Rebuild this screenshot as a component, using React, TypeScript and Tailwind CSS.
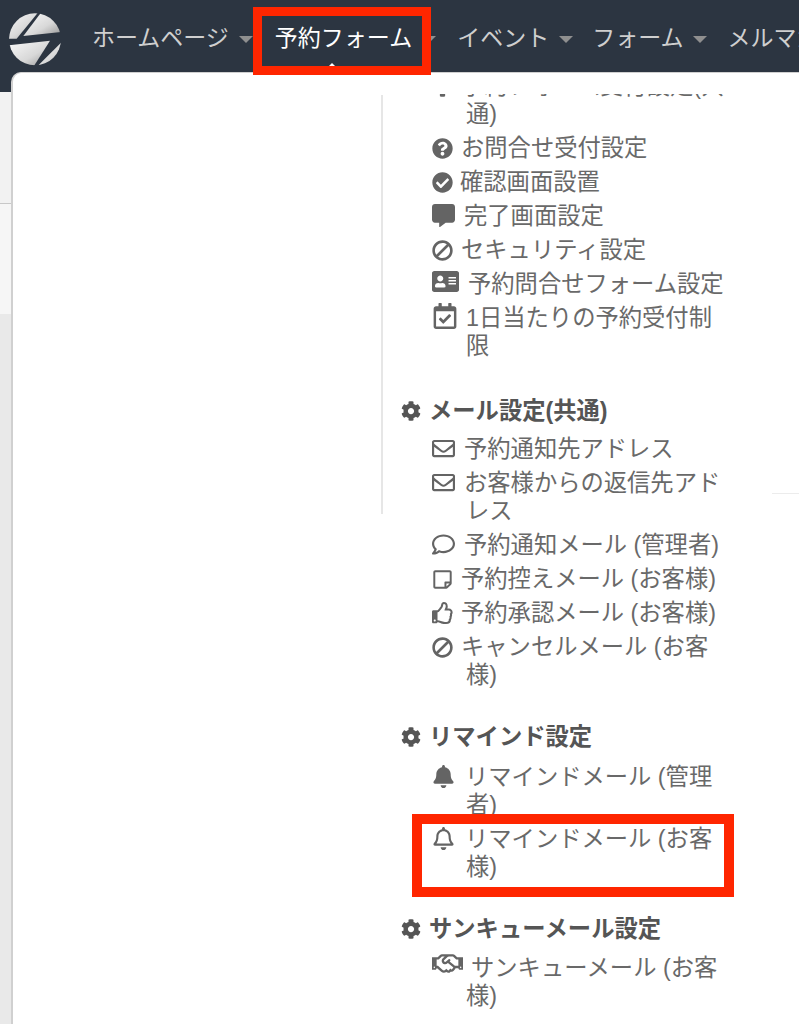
import React from 'react';
import {
  FaAddressCard,
  FaBan,
  FaBell,
  FaCheckCircle,
  FaCog,
  FaCommentAlt,
  FaQuestionCircle,
  FaRegBell,
  FaRegCalendarCheck,
  FaRegComment,
  FaRegEnvelope,
  FaRegHandshake,
  FaRegStickyNote,
  FaRegThumbsUp,
} from 'react-icons/fa';

const navItems = [
  { label: 'ホームページ', active: false, gap: 'mr-[22px]' },
  { label: '予約フォーム', active: true, gap: 'mr-[21px]' },
  { label: 'イベント', active: false, gap: 'mr-[19px]' },
  { label: 'フォーム', active: false, gap: 'mr-[20px]' },
  { label: 'メルマガ', active: false, gap: 'mr-[21px]' },
];

type Row = { icon: React.ReactNode; slot: string; text: string };

const banIcon = <FaBan className="-scale-x-100" />;

const formRows: Row[] = [
  { icon: <FaCog />, slot: 'w-[29px] text-[21px]', text: '予約フォーム受付設定(共\u200b通)' },
  { icon: <FaQuestionCircle />, slot: 'w-[29px] text-[21px]', text: 'お問合せ受付設定' },
  { icon: <FaCheckCircle />, slot: 'w-[28px] text-[21px]', text: '確認画面設置' },
  { icon: <FaCommentAlt />, slot: 'w-[32px] text-[23px]', text: '完了画面設定' },
  { icon: banIcon, slot: 'w-[29px] text-[21px]', text: 'セキュリティ設定' },
  { icon: <FaAddressCard />, slot: 'w-[36px] text-[27px]', text: '予約問合せフォーム設定' },
  { icon: <FaRegCalendarCheck />, slot: 'w-[34px] text-[26px]', text: '1日当たりの予約受付制限' },
];

const mailRows: Row[] = [
  { icon: <FaRegEnvelope />, slot: 'w-[32px] text-[23px]', text: '予約通知先アドレス' },
  { icon: <FaRegEnvelope />, slot: 'w-[32px] text-[23px]', text: 'お客様からの返信先アドレス' },
  { icon: <FaRegComment />, slot: 'w-[32px] text-[23px]', text: '予約通知メール (管理者)' },
  { icon: <FaRegStickyNote />, slot: 'w-[29px] text-[21px]', text: '予約控えメール (お客様)' },
  { icon: <FaRegThumbsUp />, slot: 'w-[29px] text-[22px]', text: '予約承認メール (お客様)' },
  { icon: banIcon, slot: 'w-[29px] text-[21px]', text: 'キャンセルメール (お客様)' },
];

const remindRows: Row[] = [
  { icon: <FaBell />, slot: 'w-[33px] text-[23px]', text: 'リマインドメール (管理者)' },
  { icon: <FaRegBell />, slot: 'w-[33px] text-[23px]', text: 'リマインドメール (お客様)' },
];

const thanksRows: Row[] = [
  { icon: <FaRegHandshake />, slot: 'w-[39px] text-[31px]', text: 'サンキューメール (お客様)' },
];

function Logo() {
  return (
    <svg viewBox="0 0 186 186" className="w-[62px] h-[62px] shrink-0">
      <defs>
        <linearGradient id="logoFill" x1="0.1" y1="0.1" x2="0.9" y2="0.9">
          <stop offset="0" stopColor="#f6f6f6" />
          <stop offset="0.6" stopColor="#d8d8d8" />
          <stop offset="1" stopColor="#a0a0a0" />
        </linearGradient>
        <clipPath id="logoClip">
          <circle cx="93" cy="94" r="78" />
        </clipPath>
      </defs>
      <g clipPath="url(#logoClip)" fill="url(#logoFill)">
        <path d="M105 10 L38 92 L5 92 L5 10 Z" />
        <path d="M114 10 L58 84 L180 71 L180 10 Z" />
        <path d="M5 113 L138 98 L86 180 L5 180 Z" />
        <path d="M95 180 L175 100 L180 180 Z" />
      </g>
    </svg>
  );
}

function MenuRow({ row }: { row: Row }) {
  return (
    <li className="pl-[34px] -indent-[34px] mb-[6px] leading-[28px]">
      <span className={`${row.slot} inline-flex items-center h-[20px] indent-0 align-[-3px] text-[#646464]`}>
        {row.icon}
      </span>
      {row.text}
    </li>
  );
}

function Heading({ text }: { text: string }) {
  return (
    <h4 className="flex items-center gap-[8px] h-[28px] font-bold text-[#555555]">
      <FaCog className="w-[20px] h-[20px] shrink-0 text-[#555555]" />
      {text}
    </h4>
  );
}

export default function App() {
  return (
    <div
      className="relative w-[799px] h-[1024px] overflow-hidden bg-white"
      style={{ fontFamily: '"Liberation Sans", "Noto Sans CJK JP", sans-serif' }}
    >
      <header className="h-[92px] bg-[#2c3541] flex items-start pl-[4px] pt-[8px]">
        <Logo />
        <nav className="flex items-center ml-[26px] h-[60px] whitespace-nowrap text-[23px]">
          {navItems.map((item) => (
            <div key={item.label} className="flex items-center shrink-0">
              <span className={item.active ? 'text-white' : 'text-[#cfcfcf]'}>{item.label}</span>
              <span className={`${item.gap} ml-[10px] w-0 h-0 border-x-[7px] border-x-transparent border-t-[7px] border-t-[#8f8f8f] mt-[2px]`} />
            </div>
          ))}
        </nav>
      </header>

      {/* page behind the dropdown, only a sliver shows */}
      <div className="flex flex-col h-[932px]">
        <div className="h-[112px] bg-[#f2f2f2] border-b border-[#c8c8c8]" />
        <div className="h-[110px] bg-[#f6f6f6]" />
        <div className="flex-1 bg-[#e9e9e9]" />
      </div>

      {/* dropdown */}
      <div className="absolute left-[11px] top-[72px] right-0 bottom-0 flex bg-white rounded-tl-[10px] border-l-2 border-t border-[#d0d0d0] text-[23.3px] text-[#696969]">
        <div className="w-[370px] shrink-0 mt-[22px] h-[419px] border-r-2 border-[#e6e6e6]" />
        <div className="flex-1 mt-[21px] overflow-hidden pl-[18px] pr-[71px]">
          <div className="-mt-[22px]">
            <ul className="pl-[31px]">
              {formRows.map((row) => (
                <MenuRow key={row.text} row={row} />
              ))}
            </ul>
            <section className="mt-[37px]">
              <Heading text="メール設定(共通)" />
              <ul className="pl-[31px] mt-[10px]">
                {mailRows.map((row) => (
                  <MenuRow key={row.text} row={row} />
                ))}
              </ul>
            </section>
            <section className="mt-[34px]">
              <Heading text="リマインド設定" />
              <ul className="pl-[31px] mt-[12px]">
                {remindRows.map((row) => (
                  <MenuRow key={row.text} row={row} />
                ))}
              </ul>
            </section>
            <section className="mt-[34px]">
              <Heading text="サンキューメール設定" />
              <ul className="pl-[31px] mt-[10px]">
                {thanksRows.map((row) => (
                  <MenuRow key={row.text} row={row} />
                ))}
              </ul>
            </section>
          </div>
        </div>
        <div className="absolute right-0 top-[420px] w-[27px] h-px bg-[#ececec]" />
      </div>

      {/* little caret under the active item */}
      <div className="absolute left-[329px] top-[63px] w-0 h-0 border-x-[3px] border-x-transparent border-b-[3px] border-b-white" />

      {/* red annotation boxes */}
      <div className="absolute left-[253px] top-[7px] w-[178px] h-[68px] border-[9px] border-[#ff2600]" />
      <div className="absolute left-[412px] top-[814px] w-[322px] h-[83px] border-[10px] border-[#ff2600]" />
    </div>
  );
}
